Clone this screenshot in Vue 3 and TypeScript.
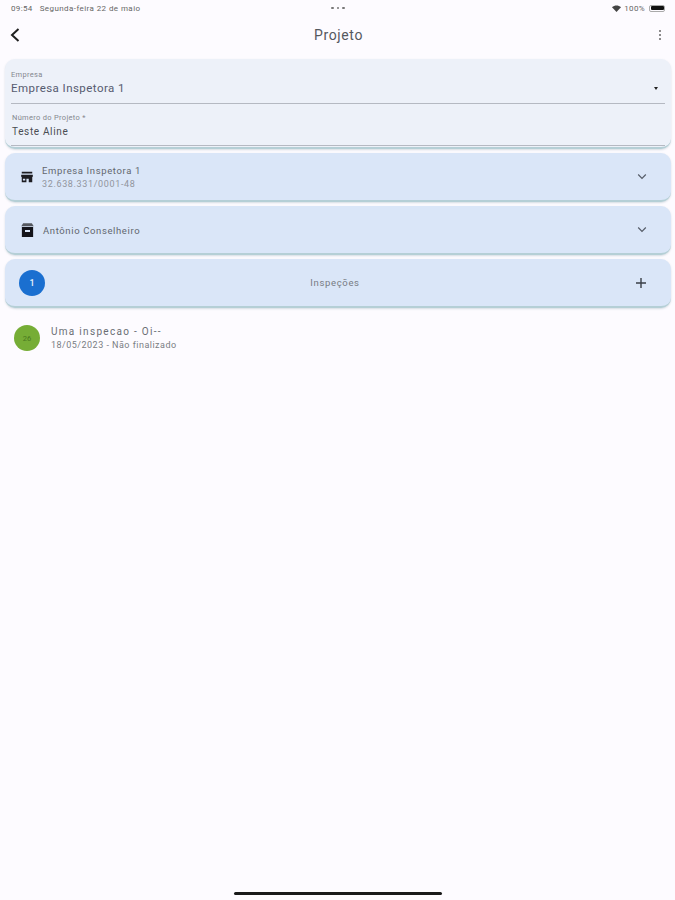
<template>
  <div class="screen">
    <div class="status-bar">
      <div class="status-left">
        <span class="status-time">09:54</span>
        <span class="status-date">Segunda-feira 22 de maio</span>
      </div>
      <div class="status-dots"><i></i><i></i><i></i></div>
      <div class="status-right">
        <svg class="wifi" width="9" height="7" viewBox="0 0 18 14">
          <path d="M9 14 0 4.5C5-.5 13-.5 18 4.5z" fill="#444" />
        </svg>
        <span class="status-pct">100%</span>
        <div class="battery"><div class="battery-fill"></div></div>
      </div>
    </div>

    <header class="app-bar">
      <svg class="back" width="12" height="16" viewBox="0 0 12 16">
        <path d="M9.5 2 3 8l6.5 6" fill="none" stroke="#1f1f1f" stroke-width="2" />
      </svg>
      <h1 class="title">Projeto</h1>
      <div class="more"><i></i><i></i><i></i></div>
    </header>

    <main class="content">
      <section class="card form-card">
        <div class="field select-field">
          <label class="field-label">Empresa</label>
          <div class="field-value-row">
            <span class="field-value company">Empresa Inspetora 1</span>
            <span class="caret"></span>
          </div>
        </div>
        <div class="field name-field">
          <label class="field-label">Número do Projeto *</label>
          <span class="field-value project">Teste Aline</span>
        </div>
      </section>

      <section v-for="row in rows" :key="row.title" class="card row-card">
        <svg v-if="row.icon === 'store'" class="row-icon" width="14" height="14" viewBox="0 0 24 24">
          <path d="M3 3h18v3H3z M2 8h20v3l-.6 1H21v9h-6v-6h-4v6H3v-9h-.4L2 11z M5 15v3h4v-3z" fill="#1d1d22" fill-rule="evenodd" />
        </svg>
        <svg v-else class="row-icon" width="15" height="16" viewBox="0 0 24 24">
          <path d="M5 1h14l3 5H2z" fill="#55585f" />
          <path d="M3 7h18v16H3z M8 12v3h8v-3z" fill="#14141a" fill-rule="evenodd" />
        </svg>
        <div class="row-text">
          <span class="row-title">{{ row.title }}</span>
          <span v-if="row.subtitle" class="row-subtitle">{{ row.subtitle }}</span>
        </div>
        <svg class="chevron" width="10" height="7" viewBox="0 0 10 7">
          <path d="M1.2 1.5 5 5.3l3.8-3.8" fill="none" stroke="#555c68" stroke-width="1.2" />
        </svg>
      </section>

      <section class="card row-card inspections-card">
        <span class="count-badge">1</span>
        <span class="inspections-title">Inspeções</span>
        <svg class="plus" width="12" height="12" viewBox="0 0 12 12">
          <path d="M6 1v10M1 6h10" fill="none" stroke="#3a3f47" stroke-width="1.4" />
        </svg>
      </section>

      <div class="inspection-item">
        <span class="score-badge">26</span>
        <div class="inspection-text">
          <span class="inspection-title">Uma inspecao - Oi--</span>
          <span class="inspection-sub">18/05/2023 - Não finalizado</span>
        </div>
      </div>
    </main>

    <div class="home-indicator"></div>
  </div>
</template>

<script setup lang="ts">
interface InfoRow {
  title: string
  subtitle?: string
  icon: 'store' | 'archive'
}

const rows: InfoRow[] = [
  { title: 'Empresa Inspetora 1', subtitle: '32.638.331/0001-48', icon: 'store' },
  { title: 'Antônio Conselheiro', icon: 'archive' },
]
</script>

<style>
html,
body {
  margin: 0;
  background: #fdfbff;
}
</style>

<style scoped>
.screen {
  width: 675px;
  height: 900px;
  display: flex;
  flex-direction: column;
  background: #fdfbff;
  font-family: Roboto, "Liberation Sans", sans-serif;
  color: #44474e;
  overflow: hidden;
}

.status-bar {
  height: 16px;
  display: grid;
  grid-template-columns: 1fr auto 1fr;
  align-items: center;
  padding: 0 10px 0 11px;
  font-size: 8px;
  letter-spacing: 0.35px;
  color: #666;
}

.status-date {
  margin-left: 7px;
  letter-spacing: 0.42px;
}

.status-dots {
  display: flex;
  gap: 3px;
}

.status-dots i {
  width: 2.5px;
  height: 2.5px;
  border-radius: 50%;
  background: #777;
}

.status-right {
  justify-self: end;
  display: flex;
  align-items: center;
  gap: 3px;
}

.battery {
  width: 16px;
  height: 7px;
  margin-left: 1px;
  padding: 0.5px;
  border: 0.5px solid #aaa;
  border-radius: 2px;
  box-sizing: border-box;
}

.battery-fill {
  height: 100%;
  background: #111;
  border-radius: 1px;
}

.app-bar {
  height: 38px;
  display: flex;
  align-items: center;
  justify-content: space-between;
  padding: 0 13px 0 9px;
}

.title {
  margin: 0 2px 0 0;
  font-size: 14px;
  font-weight: 400;
  letter-spacing: 0.65px;
  color: #55585e;
}

.more {
  width: 4px;
  display: flex;
  flex-direction: column;
  align-items: center;
  gap: 1.5px;
}

.more i {
  width: 2.5px;
  height: 2.5px;
  border-radius: 50%;
  background: #666;
}

.content {
  flex: 1;
  display: flex;
  flex-direction: column;
  gap: 4px;
  padding: 5px 4px 0 5px;
}

.card {
  border-radius: 10px;
  border-bottom: 2px solid #b5cfd6;
  box-shadow: 0 1px 2px rgba(120, 150, 160, 0.3);
  box-sizing: border-box;
}

.form-card {
  height: 90px;
  background: #edf1f9;
  padding: 11px 6px 0 6px;
}

.field {
  display: flex;
  flex-direction: column;
  box-sizing: border-box;
  border-bottom: 1.5px solid #b5b9c2;
}

.select-field {
  height: 34px;
}

.name-field {
  height: 42px;
  padding: 9px 0 0 1px;
}

.field-label {
  font-size: 7.5px;
  line-height: 9px;
  letter-spacing: 0.3px;
  color: #85888f;
}

.field-value-row {
  display: flex;
  align-items: center;
  justify-content: space-between;
  padding: 2px 7px 0 0;
}

.field-value {
  font-size: 11.5px;
  line-height: 15px;
  letter-spacing: 0.45px;
}

.field-value.company {
  color: #565b70;
}

.field-value.project {
  font-size: 10px;
  letter-spacing: 0.65px;
  margin-top: 2px;
  color: #4a4d53;
}

.caret {
  width: 0;
  height: 0;
  border-left: 2.5px solid transparent;
  border-right: 2.5px solid transparent;
  border-top: 3px solid #222;
}

.row-card {
  height: 49px;
  display: flex;
  align-items: center;
  background: #dae6f8;
  padding: 0 24px 0 15px;
}

.row-icon {
  flex: none;
}

.row-text {
  flex: 1;
  display: flex;
  flex-direction: column;
  margin-left: 8px;
  gap: 2px;
  padding-top: 2px;
}

.row-title {
  font-size: 9.5px;
  line-height: 12px;
  letter-spacing: 0.62px;
  color: #62666e;
}

.row-subtitle {
  font-size: 9px;
  line-height: 11px;
  letter-spacing: 0.65px;
  color: #91959d;
}

.inspections-card {
  justify-content: space-between;
  padding: 0 24px 0 14px;
}

.count-badge {
  width: 26px;
  height: 26px;
  border-radius: 50%;
  background: #1a6fd0;
  color: #e8f0fb;
  font-size: 9px;
  font-weight: 500;
  display: flex;
  align-items: center;
  justify-content: center;
}

.inspections-title {
  font-size: 9.5px;
  letter-spacing: 0.65px;
  color: #777b83;
  margin-right: 10px;
}

.inspection-item {
  display: flex;
  align-items: center;
  margin-top: 13px;
  padding-left: 9px;
}

.score-badge {
  width: 26px;
  height: 26px;
  border-radius: 50%;
  background: #76ad36;
  color: #4a7a20;
  font-size: 7.5px;
  display: flex;
  align-items: center;
  justify-content: center;
}

.inspection-text {
  display: flex;
  flex-direction: column;
  margin-left: 11px;
  gap: 2px;
}

.inspection-title {
  font-size: 10px;
  line-height: 13px;
  letter-spacing: 1.3px;
  color: #6a6d73;
}

.inspection-sub {
  font-size: 9px;
  line-height: 11px;
  letter-spacing: 0.48px;
  color: #7a7d83;
}

.home-indicator {
  width: 208px;
  height: 3px;
  margin: 0 auto 5px;
  border-radius: 2px;
  background: #1a1a1a;
}
</style>
